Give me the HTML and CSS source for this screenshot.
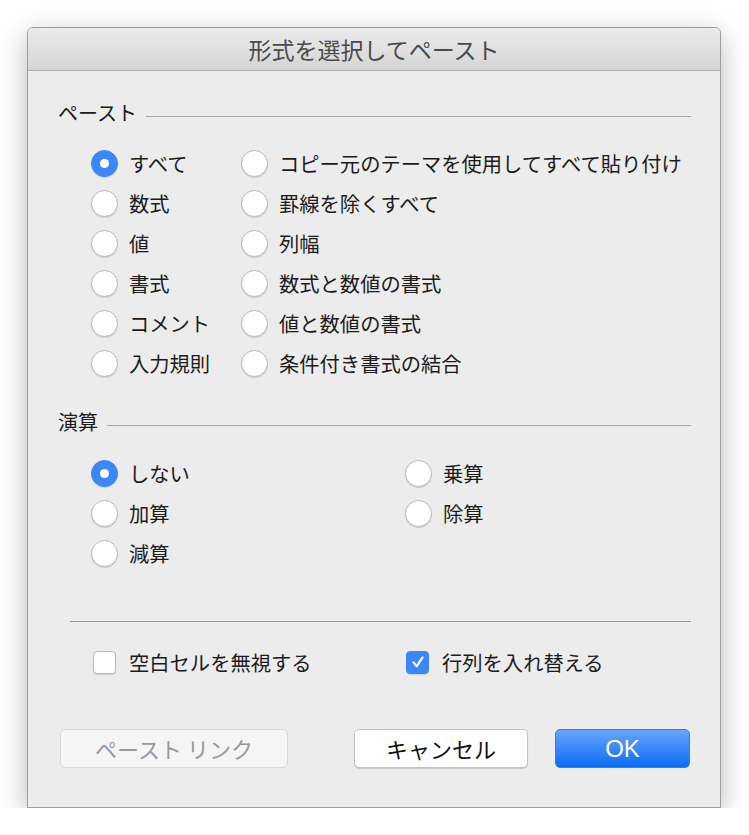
FILE: index.html
```html
<!DOCTYPE html>
<html lang="ja">
<head>
    <meta charset="UTF-8">
    <title>形式を選択してペースト</title>
    <link rel="stylesheet" href="styles.css">
</head>
<body>

    <div class="window">
        <div class="titlebar">形式を選択してペースト</div>

        <div class="content">
            <!-- ペースト -->
            <div class="group-title"><span>ペースト</span><span class="rule"></span></div>
            <div class="options paste-options">
                <label class="option"><span class="radio checked"></span>すべて</label>
                <label class="option"><span class="radio"></span>コピー元のテーマを使用してすべて貼り付け</label>
                <label class="option"><span class="radio"></span>数式</label>
                <label class="option"><span class="radio"></span>罫線を除くすべて</label>
                <label class="option"><span class="radio"></span>値</label>
                <label class="option"><span class="radio"></span>列幅</label>
                <label class="option"><span class="radio"></span>書式</label>
                <label class="option"><span class="radio"></span>数式と数値の書式</label>
                <label class="option"><span class="radio"></span>コメント</label>
                <label class="option"><span class="radio"></span>値と数値の書式</label>
                <label class="option"><span class="radio"></span>入力規則</label>
                <label class="option"><span class="radio"></span>条件付き書式の結合</label>
            </div>

            <!-- 演算 -->
            <div class="group-title calc-title"><span>演算</span><span class="rule"></span></div>
            <div class="options calc-options">
                <label class="option"><span class="radio checked"></span>しない</label>
                <label class="option"><span class="radio"></span>乗算</label>
                <label class="option"><span class="radio"></span>加算</label>
                <label class="option"><span class="radio"></span>除算</label>
                <label class="option"><span class="radio"></span>減算</label>
            </div>

            <div class="separator"></div>

            <div class="checks">
                <label class="option"><span class="checkbox"></span>空白セルを無視する</label>
                <label class="option"><span class="checkbox checked">
                    <svg width="16" height="16" viewBox="0 0 16 16"><path d="M3.5 8.5 L6.8 12.2 L12.5 3.5" fill="none" stroke="#fff" stroke-width="2.2" stroke-linecap="round" stroke-linejoin="round"/></svg>
                </span>行列を入れ替える</label>
            </div>

            <div class="buttons">
                <button class="btn btn-disabled">ペースト リンク</button>
                <button class="btn btn-cancel">キャンセル</button>
                <button class="btn btn-ok">OK</button>
            </div>
        </div>
    </div>

</body>
</html>
```

FILE: styles.css
```css
body {
    margin: 0;
    background: #fff;
    font-family: "Noto Sans CJK JP", "Noto Sans", sans-serif;
    color: #1b1b1b;
}

.window {
    margin: 27px 0 0 27px;
    width: 692px;
    height: 779px;
    border: 1px solid #9e9e9e;
    border-radius: 6px 6px 0 0;
    background: #ececec;
    box-shadow: 0 8px 28px rgba(0, 0, 0, 0.28);
    overflow: hidden;
}

.titlebar {
    height: 42px;
    line-height: 42px;
    text-align: center;
    font-size: 23px;
    color: #4a4a4a;
    background: linear-gradient(#ebebeb, #d5d5d5);
    border-bottom: 1px solid #b3b3b3;
}

.content {
    padding: 30px 29px 0 30px;
}

.group-title {
    display: flex;
    align-items: center;
    height: 24px;
    font-size: 20px;
    line-height: 24px;
}

.group-title .rule {
    flex: 1;
    height: 1px;
    background: #a9a9a9;
    margin: 6px 0 0 9px;
}

.calc-title {
    margin-top: 27px;
}

.options {
    display: grid;
    margin: 18px 0 0 33px;
}

.paste-options {
    grid-template-columns: 150px 1fr;
}

.calc-options {
    margin-top: 19px;
    grid-template-columns: 314px 1fr;
}

.option {
    display: flex;
    align-items: center;
    height: 40px;
    font-size: 20.3px;
    white-space: nowrap;
}

.radio {
    width: 25px;
    height: 25px;
    border-radius: 50%;
    background: #fff;
    border: 1px solid #b9b9b9;
    box-shadow: 0 1px 1px rgba(0, 0, 0, 0.12);
    margin-right: 11px;
    flex-shrink: 0;
    position: relative;
}

.radio.checked {
    background: #3b87f7;
    border-color: #3b87f7;
}

.radio.checked:after {
    content: "";
    position: absolute;
    width: 9px;
    height: 9px;
    border-radius: 50%;
    background: #fff;
    left: 8px;
    top: 8px;
}

.separator {
    height: 1px;
    background: #9a9a9a;
    margin: 48px 0 0 12px;
}

.checks {
    display: grid;
    grid-template-columns: 313px 1fr;
    margin: 20px 0 0 35px;
}

.checkbox {
    width: 21px;
    height: 21px;
    border-radius: 4px;
    background: #fff;
    border: 1px solid #b9b9b9;
    box-shadow: 0 1px 1px rgba(0, 0, 0, 0.1);
    margin-right: 13px;
    display: flex;
    align-items: center;
    justify-content: center;
}

.checkbox.checked {
    background: #3b87f7;
    border-color: #3b87f7;
}

.buttons {
    display: flex;
    margin: 47px 0 0 2px;
}

.btn {
    height: 39px;
    border-radius: 5px;
    font-family: "Noto Sans CJK JP", sans-serif;
    font-size: 22px;
    padding: 0;
    line-height: 37px;
}

.btn-disabled {
    width: 228px;
    background: #f5f5f5;
    color: #9a9a9a;
    border: 1px solid #d8d8d8;
}

.btn-cancel {
    width: 174px;
    margin-left: 66px;
    background: #fff;
    color: #111;
    border: 1px solid #c2c2c2;
    box-shadow: 0 1px 1px rgba(0, 0, 0, 0.15);
}

.btn-ok {
    width: 135px;
    margin-left: 27px;
    background: linear-gradient(#69a6fb, #0a6cf6);
    color: #fff;
    border: 1px solid #2f7ef0;
    font-family: "Liberation Sans", Arial, sans-serif;
    font-size: 24px;
}
```
